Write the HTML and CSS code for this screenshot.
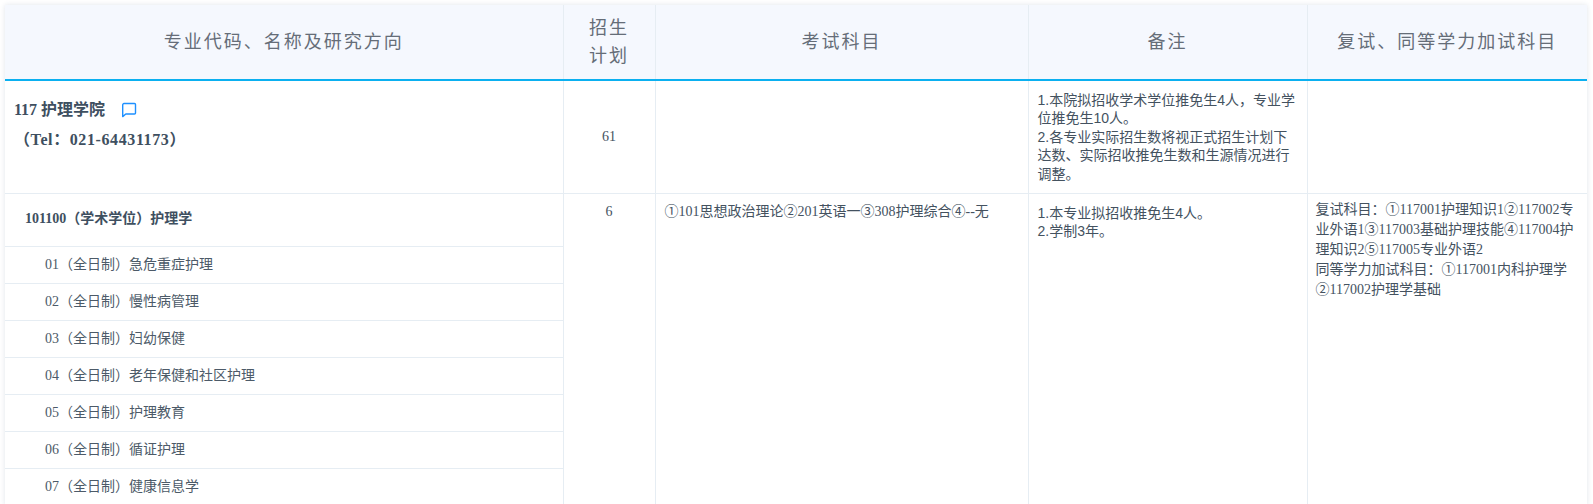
FILE: index.html
```html
<!DOCTYPE html>
<html lang="zh-CN">
<head>
<meta charset="utf-8">
<title>专业目录</title>
<link rel="stylesheet" href="styles.css">
</head>
<body>
<div class="sheet">
<table class="catalog">
  <colgroup>
    <col class="col-major"><col class="col-plan"><col class="col-exam"><col class="col-note"><col class="col-retest">
  </colgroup>
  <thead>
    <tr>
      <th>专业代码、名称及研究方向</th>
      <th>招生<br>计划</th>
      <th>考试科目</th>
      <th>备注</th>
      <th>复试、同等学力加试科目</th>
    </tr>
  </thead>
  <tbody>
    <tr class="school">
      <td class="school-name">
        <div class="school-title"><span>117 护理学院</span>
          <svg class="chat" viewBox="0 0 16 16" width="16" height="16" aria-hidden="true"><path d="M3 1.5h10.5a1 1 0 0 1 1 1v8.5a1 1 0 0 1-1 1H4.8L1.7 14.6V2.8a1.3 1.3 0 0 1 1.3-1.3z" fill="none" stroke="#1e90ff" stroke-width="1.4" stroke-linejoin="round"/></svg>
        </div>
        <div class="school-tel">（Tel：021-64431173）</div>
      </td>
      <td class="plan plan-mid">61</td>
      <td></td>
      <td class="note">1.本院拟招收学术学位推免生4人，专业学位推免生10人。<br>2.各专业实际招生数将视正式招生计划下达数、实际招收推免生数和生源情况进行调整。</td>
      <td></td>
    </tr>
    <tr class="major">
      <td class="tracks">
        <div class="major-name">101100（学术学位）护理学</div>
        <ul class="track-list">
          <li>01（全日制）急危重症护理</li>
          <li>02（全日制）慢性病管理</li>
          <li>03（全日制）妇幼保健</li>
          <li>04（全日制）老年保健和社区护理</li>
          <li>05（全日制）护理教育</li>
          <li>06（全日制）循证护理</li>
          <li>07（全日制）健康信息学</li>
        </ul>
      </td>
      <td class="plan plan-top">6</td>
      <td class="exam">①101思想政治理论②201英语一③308护理综合④--无</td>
      <td class="note note-top">1.本专业拟招收推免生4人。<br>2.学制3年。</td>
      <td class="retest">复试科目：①117001护理知识1②117002专业外语1③117003基础护理技能④117004护理知识2⑤117005专业外语2<br>同等学力加试科目：①117001内科护理学②117002护理学基础</td>
    </tr>
  </tbody>
</table>
</div>
</body>
</html>
```

FILE: styles.css
```css
html, body {
  margin: 0;
  height: 100%;
  overflow: hidden;
  background: #fff;
}
.sheet {
  margin: 5px 6px 0 5px;
  box-shadow: 0 0 5px rgba(40, 70, 110, .14);
}
.catalog {
  width: 1582px;
  border-collapse: collapse;
  table-layout: fixed;
  font-family: "Liberation Serif", "Noto Sans CJK SC", serif;
  font-size: 14px;
  color: #44525f;
}
.col-major { width: 558px; }
.col-plan { width: 92px; }
.col-exam { width: 373px; }
.col-note { width: 279px; }
.col-retest { width: 280px; }
.catalog th {
  height: 74px;
  padding: 0 8px;
  background: #f5f8fe;
  border-left: 1px solid #e6edf3;
  border-bottom: 2px solid #0bb0f0;
  font-size: 18px;
  font-weight: 400;
  line-height: 28px;
  letter-spacing: 2px;
  color: #656d78;
  text-align: center;
}
.catalog th:first-child { border-left: 0; }
.catalog td {
  padding: 0;
  border-left: 1px solid #e6edf3;
  border-bottom: 1px solid #e6edf3;
  vertical-align: top;
}
.catalog td:first-child { border-left: 0; }
.school { height: 113px; }
.catalog .school-name { padding: 15px 0 0 9px; }
.school-title, .school-tel {
  font-size: 16px;
  font-weight: 700;
  line-height: 28px;
  color: #3e4f60;
}
.school-title { display: flex; align-items: center; gap: 16px; }
.school-tel { margin-top: 2px; letter-spacing: .6px; }
.chat { flex: none; }
.catalog .plan { text-align: center; }
.catalog .plan-mid { vertical-align: middle; }
.catalog .plan-top { padding-top: 8px; line-height: 20px; }
.catalog .note {
  padding: 10px 8px 0 9px;
  font-family: "Liberation Sans", "Noto Sans CJK SC", sans-serif;
  line-height: 18.4px;
}
.catalog .note-top { padding-top: 10px; }
.catalog .exam { padding: 8px 9px 0; line-height: 20px; }
.catalog .retest { padding: 6px 8px 0; line-height: 20px; }
.major-name {
  height: 52px;
  padding-left: 20px;
  font-weight: 700;
  line-height: 50px;
  color: #3e4f60;
}
.track-list { margin: 0; padding: 0; list-style: none; }
.track-list li {
  height: 36px;
  padding-left: 40px;
  border-top: 1px solid #e6edf3;
  line-height: 35px;
  color: #4c5a68;
}
```
